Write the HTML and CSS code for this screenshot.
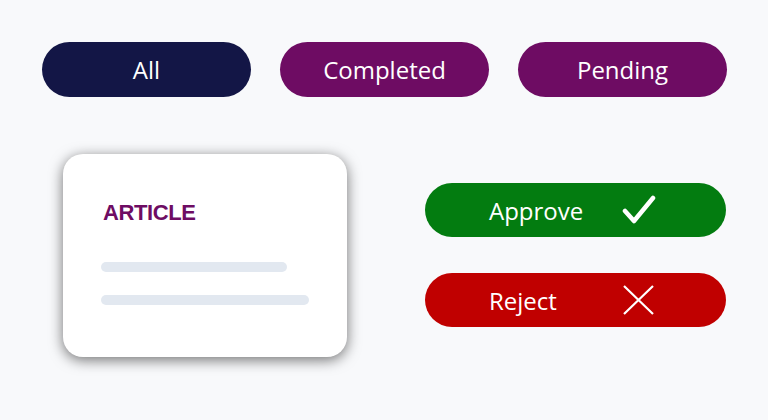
FILE: index.html
```html
<!DOCTYPE html>
<html lang="en">
<head>
    <meta charset="UTF-8">
    <meta name="viewport" content="width=device-width, initial-scale=1.0">
    <title>Article Review</title>
    <link rel="stylesheet" href="styles.css">
</head>
<body>
    <div class="filters">
        <button class="pill pill-all">All</button>
        <button class="pill pill-purple">Completed</button>
        <button class="pill pill-purple">Pending</button>
    </div>

    <div class="review">
        <div class="card">
            <h2 class="card-title">ARTICLE</h2>
            <div class="line line-short"></div>
            <div class="line line-long"></div>
        </div>

        <div class="actions">
            <button class="action approve">
                <span class="action-label">Approve</span>
                <svg class="icon" width="34" height="30" viewBox="0 0 34 30">
                    <path d="M3 16 L12 26 L31 3" fill="none" stroke="#fff" stroke-width="4.5" stroke-linecap="round" stroke-linejoin="round"/>
                </svg>
            </button>
            <button class="action reject">
                <span class="action-label">Reject</span>
                <svg class="icon" width="34" height="30" viewBox="0 0 34 30">
                    <path d="M2 1 L31 29 M31 1 L2 29" fill="none" stroke="#fff" stroke-width="2.2"/>
                </svg>
            </button>
        </div>
    </div>
</body>
</html>
```

FILE: styles.css
```css
/* Base */
* {
    margin: 0;
    padding: 0;
    box-sizing: border-box;
}

body {
    background-color: #f8f9fb;
    font-family: 'Open Sans', sans-serif;
    width: 768px;
    height: 420px;
    overflow: hidden;
}

button {
    border: none;
    font-family: inherit;
    color: #fff;
    cursor: pointer;
}

/* Filter pills */
.filters {
    display: flex;
    gap: 29px;
    padding: 42px 0 0 42px;
}

.pill {
    width: 209px;
    height: 55px;
    border-radius: 28px;
    font-size: 24px;
}

.pill-all {
    background-color: #131646;
}

.pill-purple {
    background-color: #6e0c63;
}

/* Card and actions */
.review {
    display: flex;
    padding: 57px 0 0 63px;
}

.card {
    width: 284px;
    height: 203px;
    background-color: #fff;
    border-radius: 20px;
    box-shadow: 0 3px 14px rgba(0, 0, 0, 0.55);
    padding: 46px 38px 0 38px;
}

.card-title {
    font-family: 'Liberation Sans', Arial, sans-serif;
    color: #6e0c63;
    font-size: 22px;
    font-weight: 700;
    letter-spacing: -0.4px;
    padding-left: 2px;
    margin-bottom: 36px;
}

.line {
    height: 10px;
    border-radius: 5px;
    background-color: #e2e8f0;
}

.line-short {
    width: 186px;
    margin-bottom: 23px;
}

.line-long {
    width: 208px;
}

.actions {
    display: flex;
    flex-direction: column;
    gap: 36px;
    margin: 29px 0 0 78px;
}

.action {
    width: 301px;
    height: 54px;
    border-radius: 27px;
    font-size: 24px;
    display: grid;
    grid-template-columns: 133px auto;
    align-items: center;
    justify-items: start;
    padding-left: 64px;
}

.approve {
    background-color: #037c10;
}

.reject {
    background-color: #c00000;
}

.icon {
    display: block;
}
```
